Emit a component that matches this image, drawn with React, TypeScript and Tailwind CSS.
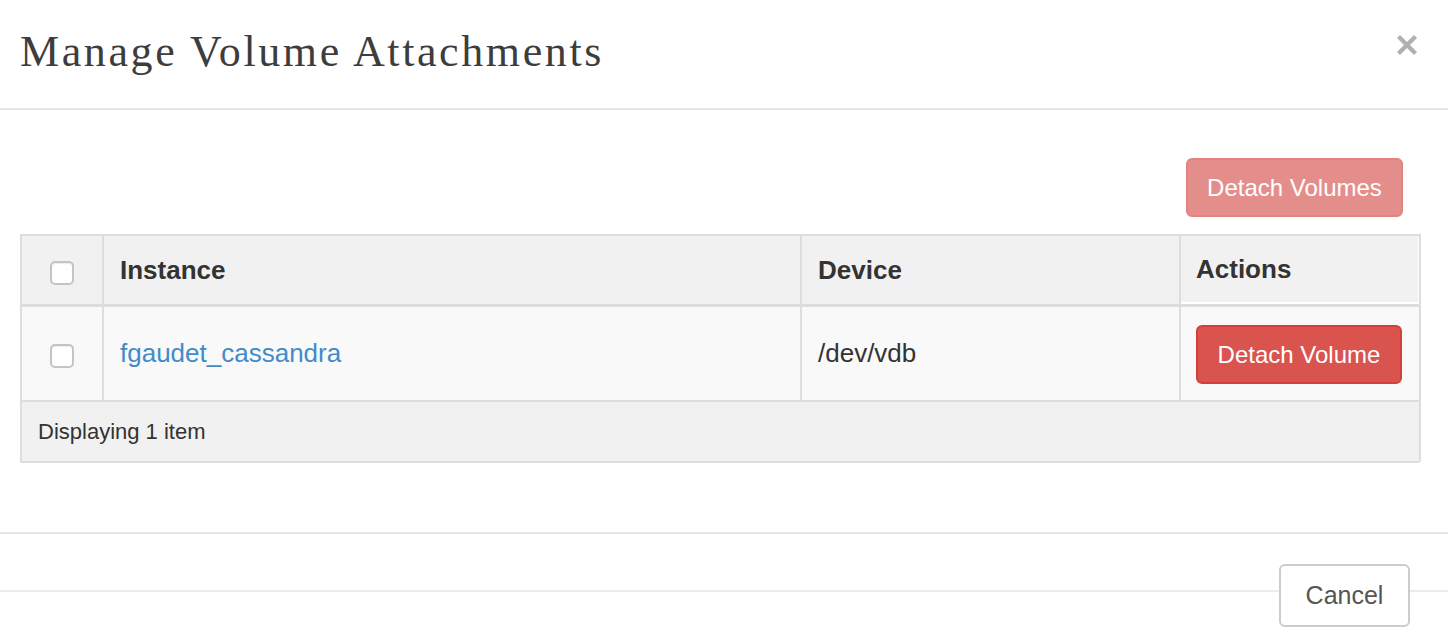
import React from "react";

const sans = { fontFamily: '"Liberation Sans", Arial, sans-serif' };

function Checkbox() {
  return <span className="block w-[24px] h-[24px] rounded-[5px] border-2 border-[#c4c4c4] bg-white shadow-[inset_0_1px_1px_rgba(0,0,0,0.08)]" />;
}

function CloseIcon() {
  return (
    <svg width="20" height="20" viewBox="0 0 20 20" className="block">
      <line x1="1.5" y1="1.5" x2="18.5" y2="18.5" stroke="#b0b0b0" strokeWidth="4.2" />
      <line x1="18.5" y1="1.5" x2="1.5" y2="18.5" stroke="#b0b0b0" strokeWidth="4.2" />
    </svg>
  );
}

export default function App() {
  return (
    <div className="w-[1448px] h-[644px] bg-white overflow-hidden text-[#333]" style={sans}>
      {/* Modal header */}
      <div className="flex items-center justify-between h-[110px] border-b-2 border-[#e5e5e5] pl-[20px] pr-[31px]">
        <h3
          className="text-[44px] leading-none tracking-[2.6px] text-[#3d3d3d] font-normal pb-[4px]"
          style={{ fontFamily: '"Liberation Serif", "Times New Roman", serif' }}
        >
          Manage Volume Attachments
        </h3>
        <button className="mb-[18px]">
          <CloseIcon />
        </button>
      </div>

      {/* Modal body */}
      <div className="pl-[20px] pr-[27px] pt-[48px] pb-[69px] border-b-2 border-[#e5e5e5]">
        <div className="flex justify-end pr-[18px]">
          <button className="w-[217px] h-[59px] rounded-[6px] bg-[#e48e8c] border-2 border-[#e3837f] text-white text-[24px]">
            Detach Volumes
          </button>
        </div>

        <div className="mt-[17px] w-[1401px] border-2 border-[#dddddd] rounded-br-[4px]">
          {/* Header row */}
          <div className="grid grid-cols-[82px_698px_379px_1fr] h-[71px] bg-[#f1f1f1] border-b-[3px] border-[#dddddd]">
            <div className="flex items-center justify-center border-r-2 border-[#dddddd] pt-[6px]">
              <Checkbox />
            </div>
            <div className="flex items-center pl-[16px] border-r-2 border-[#dddddd] text-[26px] font-bold">Instance</div>
            <div className="flex items-center pl-[16px] border-r-2 border-[#dddddd] text-[26px] font-bold">Device</div>
            <div className="flex items-center pl-[15px] text-[26px] font-bold border-r border-b-2 border-white rounded-tr-[4px]">Actions</div>
          </div>

          {/* Body row */}
          <div className="grid grid-cols-[82px_698px_379px_1fr] h-[95px] bg-[#f9f9f9] border-b-2 border-[#dddddd]">
            <div className="flex items-center justify-center border-r-2 border-[#dddddd] pt-[4px]">
              <Checkbox />
            </div>
            <div className="flex items-center pl-[16px] border-r-2 border-[#dddddd] text-[26px]">
              <a className="text-[#428bca]">fgaudet_cassandra</a>
            </div>
            <div className="flex items-center pl-[16px] border-r-2 border-[#dddddd] text-[26px]">/dev/vdb</div>
            <div className="flex items-center pl-[15px] pt-[2px]">
              <button className="w-[206px] h-[59px] rounded-[6px] bg-[#d9534f] border-2 border-[#d43f3a] text-white text-[24px]">
                Detach Volume
              </button>
            </div>
          </div>

          {/* Footer row */}
          <div className="h-[59px] bg-[#f1f1f1] flex items-center pl-[16px] text-[22px] rounded-br-[4px]">
            Displaying 1 item
          </div>
        </div>
      </div>

      {/* Modal footer */}
      <div className="flex items-start pt-[30px]">
        <div className="flex-1 h-[2px] bg-[#ececec] mt-[26px]" />
        <button className="w-[131px] h-[63px] rounded-[6px] border-2 border-[#cccccc] bg-white text-[#555] text-[25px]">
          Cancel
        </button>
        <div className="w-[38px] h-[2px] bg-[#ececec] mt-[26px]" />
      </div>
    </div>
  );
}
